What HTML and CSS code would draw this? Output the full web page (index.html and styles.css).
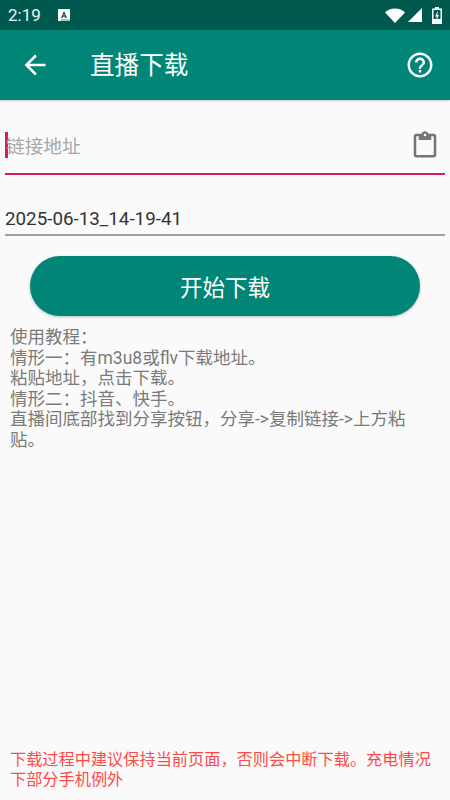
FILE: index.html
```html
<!DOCTYPE html>
<html lang="zh">
<head>
<meta charset="utf-8">
<title>直播下载</title>
<link rel="stylesheet" href="styles.css">
</head>
<body>
<div class="app">
  <div class="statusbar">
    <span class="time">2:19</span>
    <svg class="notif" width="12" height="12" viewBox="0 0 12 12"><path fill="#fff" d="M0 0h12v12H0z"/><path fill="#00594e" d="M6 2 3 9h1.500l.5-1.300h2L7.500 9H9L6 2zm0 2.800.6 1.800H5.400L6 4.800z"/><path fill="#a9c4bf" d="M3 10h9v2H3z"/></svg>
    <span class="spacer"></span>
    <svg class="wifi" width="20" height="15" viewBox="0 0 20 15"><path fill="#fff" d="M0 4.500C2.500 2 6 .5 10 .5s7.500 1.500 10 4L10 15 0 4.500z"/></svg>
    <svg class="signal" width="14" height="14" viewBox="0 0 14 14"><path fill="#fff" d="M14 0v14H0L14 0z"/></svg>
    <svg class="battery" width="10" height="17" viewBox="0 0 10 17"><path fill="#fff" d="M3 0h4v1.500h3V17H0V1.500h3V0z"/><path fill="#00594e" d="M1.500 3h7v9h-7z"/><path fill="#fff" d="M1.500 12h7v3.500h-7z"/><path fill="#fff" d="M6 3.500 3 9.500h1.800L4 14l3-6H5.300L6 3.500z"/></svg>
  </div>
  <header class="toolbar">
    <svg class="back" width="24" height="24" viewBox="0 0 24 24"><path fill="#fff" d="M22.500 10.700H6.500l7.300-7.300L12 1.600 1.600 12 12 22.400l1.800-1.800-7.300-7.300h16v-2.600z"/></svg>
    <h1 class="title">直播下载</h1>
    <svg class="help" width="30" height="30" viewBox="0 0 24 24"><path fill="#fff" d="M11 18h2v-2h-2v2zm1-16C6.480 2 2 6.480 2 12s4.480 10 10 10 10-4.480 10-10S17.520 2 12 2zm0 18c-4.410 0-8-3.590-8-8s3.590-8 8-8 8 3.590 8 8-3.590 8-8 8zm0-14c-2.210 0-4 1.790-4 4h2c0-1.100.9-2 2-2s2 .9 2 2c0 2-3 1.750-3 5h2c0-2.250 3-2.500 3-5 0-2.210-1.790-4-4-4z"/></svg>
  </header>
  <main class="content">
    <div class="field field-url">
      <span class="caret"></span>
      <span class="placeholder">链接地址</span>
      <svg class="clip" width="30" height="30" viewBox="0 0 24 24"><path fill="#757575" d="M19 3h-4.180C14.400 1.840 13.300 1 12 1s-2.400.84-2.820 2H5c-1.100 0-2 .9-2 2v15c0 1.100.9 2 2 2h14c1.100 0 2-.9 2-2V5c0-1.100-.9-2-2-2zm-7 0c.55 0 1 .45 1 1s-.45 1-1 1-1-.45-1-1 .45-1 1-1zm7 17H5V5h2v3h10V5h2v15z"/></svg>
    </div>
    <div class="field field-name">2025-06-13_14-19-41</div>
    <button class="start" type="button">开始下载</button>
    <div class="guide">
      <p>使用教程：</p>
      <p>情形一：有m3u8或flv下载地址。</p>
      <p>粘贴地址，点击下载。</p>
      <p>情形二：抖音、快手。</p>
      <p>直播间底部找到分享按钮，分享-&gt;复制链接-&gt;上方粘贴。</p>
    </div>
    <p class="warning">下载过程中建议保持当前页面，否则会中断下载。充电情况下部分手机例外</p>
  </main>
</div>
</body>
</html>
```

FILE: styles.css
```css
* { box-sizing: border-box; }
html, body { margin: 0; padding: 0; }
body {
  width: 450px;
  height: 800px;
  overflow: hidden;
  background: #fafafa;
  font-family: Roboto, "Noto Sans CJK SC", sans-serif;
}
p, h1 { margin: 0; font-weight: 400; }
.app { display: flex; flex-direction: column; height: 800px; }

.statusbar {
  height: 30px;
  flex: none;
  display: flex;
  align-items: center;
  padding: 0 8px;
  background: #00594e;
  color: #fff;
}
.time { font-size: 17px; width: 50px; line-height: 30px; color: #eef4f3; }
.notif { margin-top: -1px; }
.spacer { flex: 1; }
.wifi { margin-right: 3px; }
.signal { margin-right: 10px; }

.toolbar {
  height: 70px;
  flex: none;
  display: flex;
  align-items: center;
  padding: 0 15px 0 23px;
  background: #008577;
  box-shadow: 0 1px 2px rgba(0,0,0,.2);
  position: relative;
}
.title {
  flex: 1;
  margin-left: 43px;
  font-size: 24.6px;
  color: #fff;
  line-height: 70px;
  padding-top: 1px;
}

.content {
  flex: 1;
  display: flex;
  flex-direction: column;
  padding: 0 5px;
}
.field { display: flex; align-items: center; }
.field-url {
  height: 75px;
  padding-top: 16px;
  border-bottom: 2.5px solid #d81b60;
}
.caret { width: 2.5px; height: 26px; background: #d81b60; flex: none; }
.placeholder {
  flex: 1;
  font-size: 18.7px;
  color: #a8a8a8;
  margin-left: -1.500px;
}
.clip { margin-right: 5px; }
.field-name {
  height: 61px;
  padding-top: 29px;
  font-size: 18.8px;
  color: #333;
  border-bottom: 2px solid #a0a0a0;
}
.start {
  display: block;
  width: 390px;
  height: 60px;
  margin: 20px 0 0 25px;
  padding: 0;
  flex: none;
  border: 0;
  border-radius: 30px;
  background: #008577;
  box-shadow: 0 1px 3px rgba(0,0,0,.25);
  color: #fff;
  font-family: inherit;
  font-size: 22.5px;
}
.guide {
  flex: 1;
  margin: 11px 0 0 5px;
  padding-right: 25px;
  font-size: 17.5px;
  line-height: 20.6px;
  color: #7a7a7a;
}
.warning {
  margin: 0 0 9px 5px;
  font-size: 16.2px;
  line-height: 20.6px;
  color: #ff4a4a;
}
```
